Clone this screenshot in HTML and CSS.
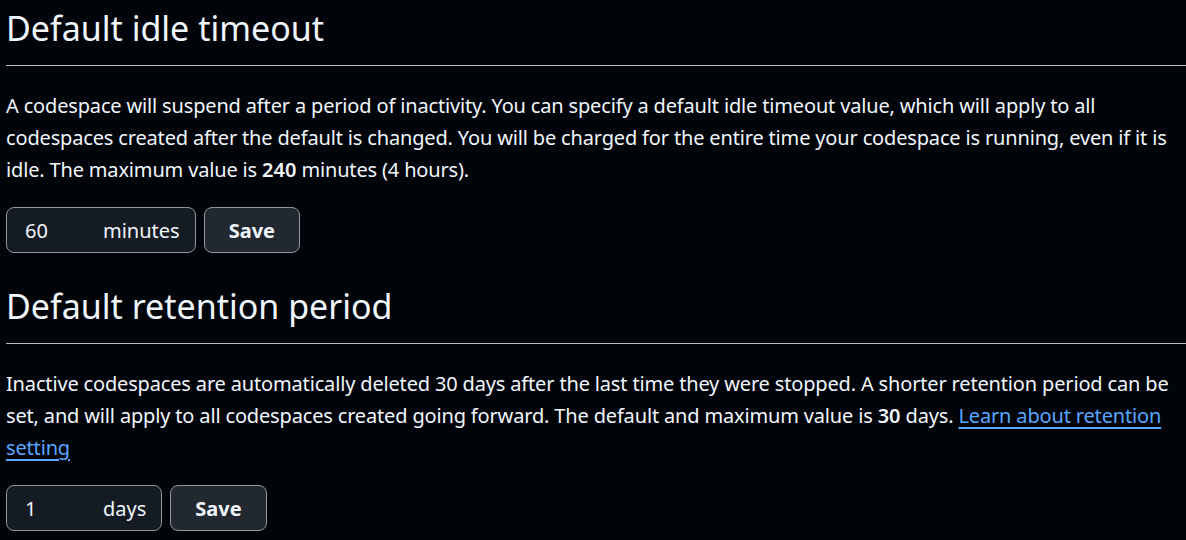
FILE: index.html
```html
<!DOCTYPE html>
<html lang="en">

<head>
    <meta charset="UTF-8">
    <meta name="viewport" content="width=device-width, initial-scale=1.0">
    <title>Codespaces settings</title>
    <link rel="stylesheet" href="styles.css">
</head>

<body>
    <section class="setting">
        <h2 class="setting-title">Default idle timeout</h2>
        <p class="setting-text">A codespace will suspend after a period of inactivity. You can specify a default idle
            timeout value, which will apply to all codespaces created after the default is changed. You will be charged
            for the entire time your codespace is running, even if it is idle. The maximum value is <b>240</b> minutes
            (4 hours).</p>
        <form class="setting-form">
            <label class="unit-input">
                <input type="text" name="timeout" value="60">
                <span class="unit">minutes</span>
            </label>
            <button type="submit" class="save-btn">Save</button>
        </form>
    </section>

    <section class="setting">
        <h2 class="setting-title">Default retention period</h2>
        <p class="setting-text">Inactive codespaces are automatically deleted 30 days after the last time they were
            stopped. A shorter retention period can be set, and will apply to all codespaces created going forward. The
            default and maximum value is <b>30</b> days. <a href="#">Learn about retention setting</a></p>
        <form class="setting-form">
            <label class="unit-input">
                <input type="text" name="retention" value="1">
                <span class="unit">days</span>
            </label>
            <button type="submit" class="save-btn">Save</button>
        </form>
    </section>
</body>

</html>
```

FILE: styles.css
```css
body {
    font-family: "Noto Sans", "Open Sans", sans-serif;
    margin: 0;
    padding: 0 0 0 6px;
    background-color: #010409;
    color: #f0f6fc;
}

.setting {
    margin-bottom: 25px;
}

.setting-title {
    margin: 0;
    padding: 8px 0 17px;
    font-size: 34px;
    font-weight: 400;
    line-height: 40px;
    border-bottom: 1px solid #b7bdc8;
}

.setting-text {
    margin: 24px 0 21px;
    font-size: 20px;
    line-height: 32px;
    letter-spacing: -0.16px;
}

.setting-text b {
    font-weight: 600;
    letter-spacing: 0;
}

.setting-text a {
    color: #58a6ff;
    text-decoration: underline;
    text-underline-offset: 4px;
}

.setting-form {
    display: flex;
    gap: 8px;
}

.unit-input {
    display: flex;
    align-items: center;
    height: 46px;
    box-sizing: border-box;
    padding: 0 15px 0 18px;
    background-color: #151b23;
    border: 1px solid #9198a1;
    border-radius: 8px;
    font-size: 20px;
}

.unit-input input {
    width: 78px;
    padding: 0;
    border: none;
    background: transparent;
    color: #f0f6fc;
    font: inherit;
    outline: none;
}

.save-btn {
    height: 46px;
    padding: 0 24px;
    background-color: #212830;
    color: #f0f6fc;
    border: 1px solid #9198a1;
    border-radius: 8px;
    font-family: inherit;
    font-size: 20px;
    font-weight: 700;
    cursor: pointer;
}
```
